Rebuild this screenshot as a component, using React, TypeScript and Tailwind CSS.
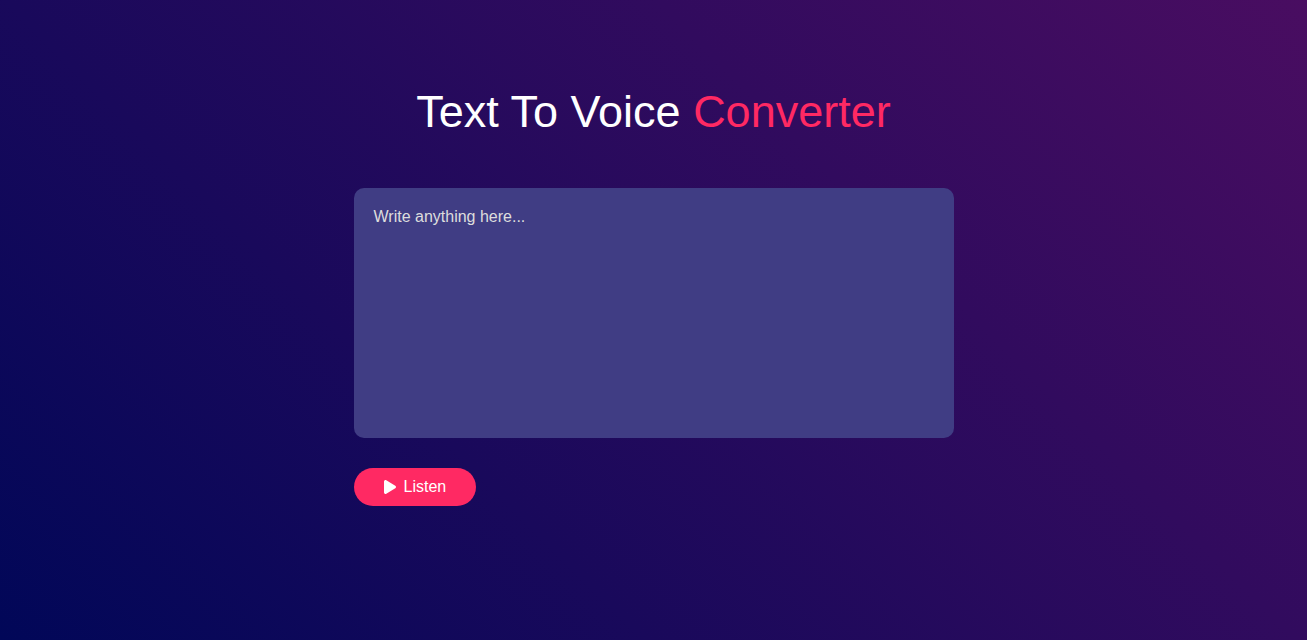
import { FaPlay } from "react-icons/fa6";

export default function App() {
  return (
    <div className="flex min-h-screen flex-col items-center justify-center bg-[linear-gradient(45deg,#010758,#490d61)] px-4 pb-12 font-['Liberation_Sans',Arial,sans-serif] text-white">
      <main className="w-full max-w-[600px]">
        <h1 className="mb-[50px] text-center text-[45px] leading-[52px]">
          Text To Voice <span className="text-[#ff2963]">Converter</span>
        </h1>
        <textarea
          aria-label="Text to convert"
          placeholder="Write anything here..."
          className="mb-[30px] block h-[250px] w-full resize-none rounded-[10px] bg-[#403d84] p-5 text-base leading-[18px] outline-none placeholder:text-[#dddddd]"
        />
        <button
          type="button"
          className="flex items-center gap-2 rounded-full bg-[#ff2963] px-[30px] py-[10px] text-base leading-[18px]"
        >
          <FaPlay className="h-4 w-3" aria-hidden="true" />
          Listen
        </button>
      </main>
    </div>
  );
}
